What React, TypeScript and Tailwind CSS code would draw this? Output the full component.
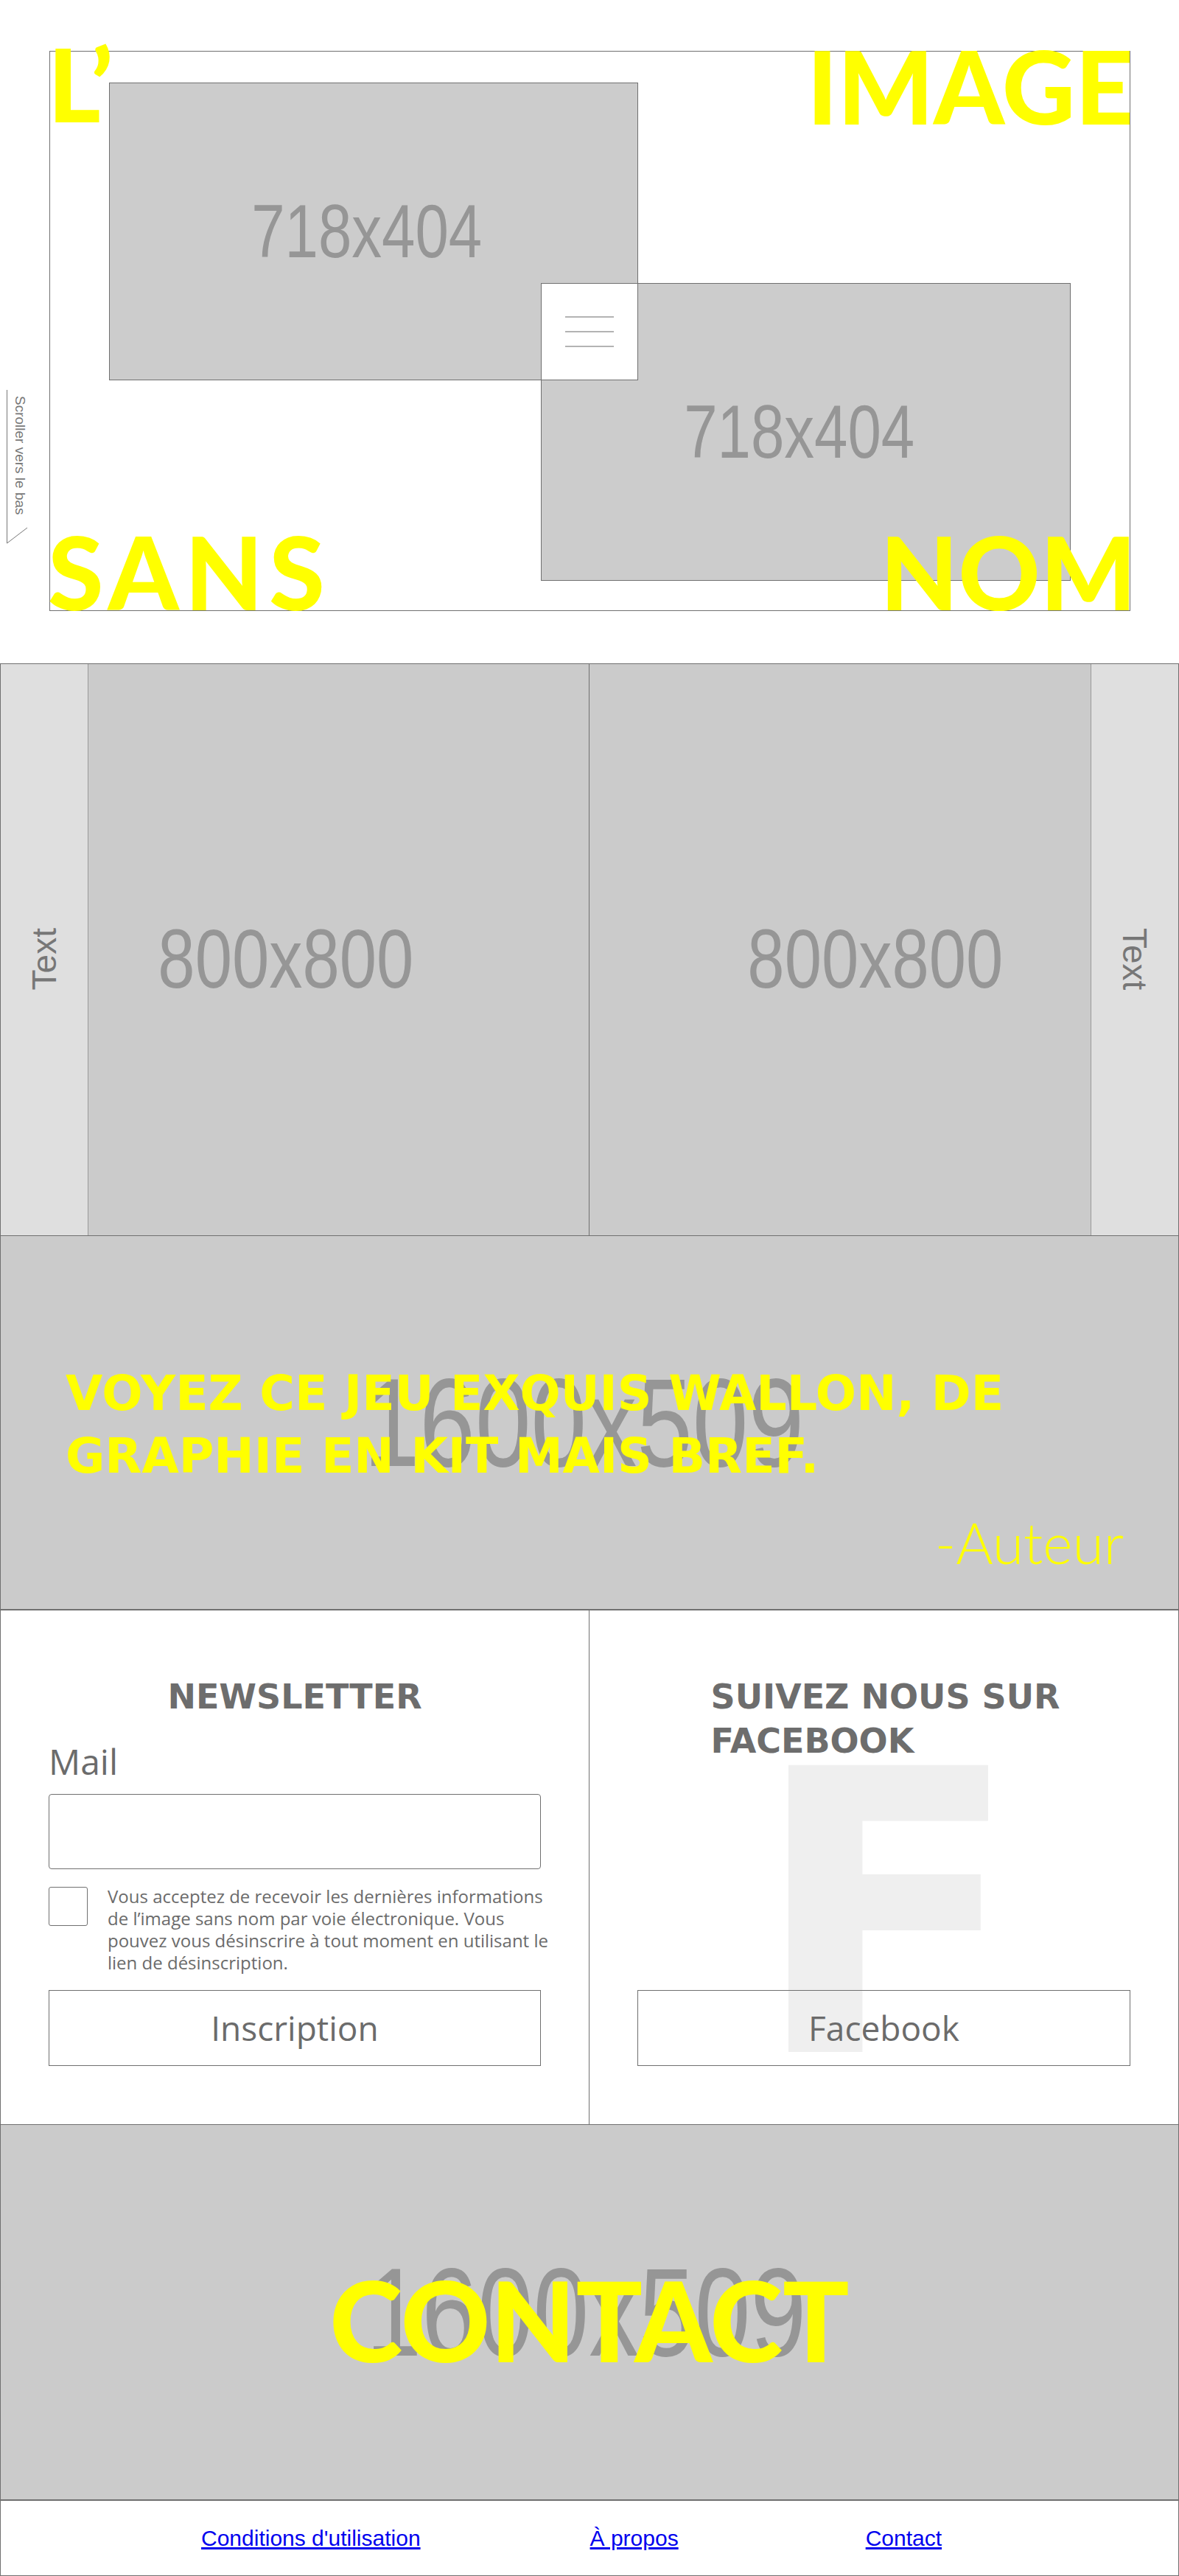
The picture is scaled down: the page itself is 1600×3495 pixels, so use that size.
import React from "react";

const border = "border-[#707070]";

function Placeholder({ label, className }: { label: string; className: string }) {
  return (
    <span
      className={`inline-block scale-x-[0.8] font-['Liberation_Sans',Arial,sans-serif] leading-none text-[#969696] ${className}`}
    >
      {label}
    </span>
  );
}

function ScrollHint() {
  return (
    <div className="absolute left-0 top-[529px] h-[212px] w-[40px]">
      <svg className="absolute inset-0" width="40" height="212" viewBox="0 0 40 212">
        <path d="M9.5 0 V208 L37 187" fill="none" stroke="#777" strokeWidth="1" />
      </svg>
      <span className="absolute left-[16px] top-[8px] font-['Liberation_Sans',Arial,sans-serif] text-[19px] leading-[22px] text-[#777] [writing-mode:vertical-rl]">
        Scroller vers le bas
      </span>
    </div>
  );
}

function Hero() {
  const big = "absolute font-['Lato',sans-serif] font-black text-[137px] leading-none text-[#ffff00]";
  return (
    <header className="relative h-[900px] bg-white pt-[69px]">
      <ScrollHint />
      <div className={`relative ml-[67px] h-[760px] w-[1467px] border ${border}`}>
        <div className={`absolute left-[80px] top-[42px] flex h-[404px] w-[718px] items-center justify-center border ${border} bg-[#cccccc] pr-[18px]`}>
          <Placeholder label="718x404" className="text-[102px]" />
        </div>
        <div className={`absolute left-[666px] top-[314px] flex h-[404px] w-[719px] items-center justify-center border ${border} bg-[#cccccc] pr-[18px]`}>
          <Placeholder label="718x404" className="text-[102px]" />
        </div>
        <button className={`absolute left-[666px] top-[314px] flex h-[132px] w-[132px] flex-col items-center justify-center gap-[18px] border ${border} bg-white`}>
          <span className="h-[2px] w-[66px] bg-[#b3b3b3]" />
          <span className="h-[2px] w-[66px] bg-[#b3b3b3]" />
          <span className="h-[2px] w-[66px] bg-[#b3b3b3]" />
        </button>
        <span className={`${big} left-[-3px] top-[-25px]`}>L’</span>
        <span className={`${big} right-[-5px] top-[-22px]`}>IMAGE</span>
        <span className={`${big} bottom-[-16px] left-[-3px] tracking-[0.06em]`}>SANS</span>
        <span className={`${big} bottom-[-16px] right-[-9px]`}>NOM</span>
      </div>
    </header>
  );
}

function Gallery() {
  const side = "font-['Liberation_Sans',Arial,sans-serif] text-[46px] leading-none text-[#777]";
  return (
    <section className={`grid h-[777px] grid-cols-2 overflow-hidden border ${border}`}>
      <div className={`grid overflow-hidden border-r ${border}`}>
        <div className="[grid-area:1/1] flex h-[800px] items-center justify-center bg-[#cbcbcb] pr-[24px]">
          <Placeholder label="800x800" className="text-[113px]" />
        </div>
        <div className="relative [grid-area:1/1] flex w-[119px] items-center justify-center border-r border-[#999] bg-[#dfdfdf]">
          <span className={`${side} rotate-180 [writing-mode:vertical-rl]`}>Text</span>
        </div>
      </div>
      <div className="grid overflow-hidden">
        <div className="[grid-area:1/1] flex h-[800px] items-center justify-center bg-[#cbcbcb] pr-[24px]">
          <Placeholder label="800x800" className="text-[113px]" />
        </div>
        <div className="relative [grid-area:1/1] flex w-[119px] items-center justify-center justify-self-end border-l border-[#999] bg-[#dfdfdf]">
          <span className={`${side} [writing-mode:vertical-rl]`}>Text</span>
        </div>
      </div>
    </section>
  );
}

function Quote() {
  return (
    <section className={`grid h-[508px] border-x border-b-2 ${border} bg-[#cbcbcb]`}>
      <div className="[grid-area:1/1] place-self-center pr-[16px]">
        <Placeholder label="1600x509" className="text-[170px]" />
      </div>
      <div className="relative z-10 [grid-area:1/1] flex flex-col pl-[88px] pr-[74px] pt-[171px]">
        <p className="font-['DejaVu_Sans',sans-serif] text-[65px] font-bold leading-[85px] text-[#ffff00]">
          VOYEZ CE JEU EXQUIS WALLON, DE
          <br />
          GRAPHIE EN KIT MAIS BREF.
        </p>
        <p className="mt-[36px] self-end font-['Lato',sans-serif] text-[77px] font-light leading-none text-[#ffff00]">
          -Auteur
        </p>
      </div>
    </section>
  );
}

function Newsletter() {
  const heading = "font-['DejaVu_Sans',sans-serif] text-[46px] font-bold leading-[60px] text-[#6d6d6d] whitespace-nowrap";
  const button = `mt-auto flex h-[103px] w-full items-center justify-center border ${border} font-['Open_Sans',sans-serif] text-[46px] text-[#6b6b6b]`;
  return (
    <section className={`grid h-[698px] grid-cols-2 border-x border-b ${border}`}>
      <div className={`flex flex-col border-r ${border} px-[65px] pb-[79px] pt-[87px]`}>
        <h2 className={`${heading} text-center`}>NEWSLETTER</h2>
        <label className="mt-[34px] font-['Open_Sans',sans-serif] text-[48px] leading-none text-[#6b6b6b]">
          Mail
        </label>
        <input type="email" className={`mt-[20px] h-[102px] w-full rounded-[4px] border ${border} bg-white`} />
        <div className="mt-[24px] flex items-start gap-[27px]">
          <span className={`h-[53px] w-[53px] shrink-0 rounded-[3px] border ${border}`} />
          <p className="-mt-[2px] whitespace-nowrap font-['Open_Sans',sans-serif] text-[24px] leading-[30px] text-[#6b6b6b]">
            Vous acceptez de recevoir les dernières informations
            <br />
            de l’image sans nom par voie électronique. Vous
            <br />
            pouvez vous désinscrire à tout moment en utilisant le
            <br />
            lien de désinscription.
          </p>
        </div>
        <button className={button}>Inscription</button>
      </div>
      <div className="relative flex flex-col overflow-hidden px-[65px] pb-[79px] pt-[87px]">
        <span className="absolute left-[221px] top-[147px] z-0 font-['DejaVu_Sans',sans-serif] text-[534px] font-bold leading-none text-[#efefef]">
          F
        </span>
        <h2 className={`${heading} relative z-10 mx-auto w-[470px] text-left`}>
          SUIVEZ NOUS SUR
          <br />
          FACEBOOK
        </h2>
        <button className={`${button} relative z-10`}>Facebook</button>
      </div>
    </section>
  );
}

function Contact() {
  return (
    <section className={`grid h-[510px] place-items-center border-x border-b-2 ${border} bg-[#cbcbcb]`}>
      <div className="[grid-area:1/1] pr-[10px]">
        <Placeholder label="1600x509" className="text-[170px]" />
      </div>
      <h2 className="relative z-10 [grid-area:1/1] mt-[20px] font-['Lato',sans-serif] text-[150px] font-black leading-none text-[#ffff00]">
        CONTACT
      </h2>
    </section>
  );
}

function Footer() {
  const link = "font-['Liberation_Sans',Arial,sans-serif] text-[30px] text-[#0000ee] underline";
  return (
    <footer className={`flex h-[102px] items-center border-x border-b ${border}`}>
      <a href="#" className={`${link} ml-[272px]`}>Conditions d'utilisation</a>
      <a href="#" className={`${link} ml-[230px]`}>À propos</a>
      <a href="#" className={`${link} ml-[254px]`}>Contact</a>
    </footer>
  );
}

export default function App() {
  return (
    <div className="w-[1600px] bg-white font-['Open_Sans',sans-serif]">
      <Hero />
      <Gallery />
      <Quote />
      <Newsletter />
      <Contact />
      <Footer />
    </div>
  );
}
